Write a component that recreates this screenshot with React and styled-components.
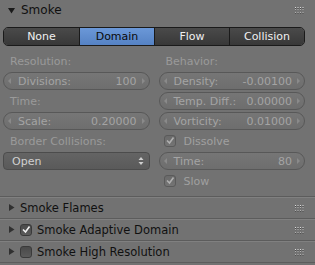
import React from "react";
import styled, { createGlobalStyle } from "styled-components";

const Global = createGlobalStyle`
  html, body { margin: 0; padding: 0; background: #727272; }
  body { font-family: "DejaVu Sans", "Liberation Sans", sans-serif; }
`;

const Root = styled.div`
  width: 315px;
  height: 265px;
  background: #727272;
  overflow: hidden;
  display: flex;
  flex-direction: column;
  & > * { flex-shrink: 0; }
`;

const PanelHeader = styled.div`
  box-sizing: border-box;
  height: ${p => (p.$sub ? "22px" : "20px")};
  flex-shrink: 0;
  display: flex;
  align-items: center;
  padding: 0 11px 0 8px;
  gap: ${p => (p.$sub ? "5px" : "6px")};
  color: #101010;
  font-size: ${p => (p.$sub ? "11.5px" : "12px")};
  border-bottom: ${p => (p.$sub ? "1px solid #5c5c5c" : "none")};
  box-shadow: ${p => (p.$sub ? "inset 0 1px 0 #808080" : "none")};
`;

const Title = styled.span`
  flex: 1;
  white-space: nowrap;
`;

const Body = styled.div`
  padding: 7px 10px 0 3px;
  display: flex;
  flex-direction: column;
  gap: 5px;
`;

const Tabs = styled.div`
  display: grid;
  grid-template-columns: repeat(4, 1fr);
  height: 19px;
  box-sizing: border-box;
  border: 1px solid #1a1a1a;
  border-radius: 5px;
  overflow: hidden;
`;

const Tab = styled.div`
  display: flex;
  align-items: center;
  justify-content: center;
  font-size: 11px;
  color: ${p => (p.$active ? "#0a0a0a" : "#f0f0f0")};
  background: ${p =>
    p.$active
      ? "linear-gradient(#6b98d8, #5582c4)"
      : "linear-gradient(#4a4a4a, #383838)"};
  border-left: ${p => (p.$first ? "none" : "1px solid #1a1a1a")};
`;

const Columns = styled.div`
  display: grid;
  grid-template-columns: 1fr 1fr;
  column-gap: 9px;
`;

const Col = styled.div`
  display: flex;
  flex-direction: column;
`;

const Row = styled.div`
  height: 20px;
  display: flex;
  align-items: center;
`;

const Label = styled.div`
  font-size: 11px;
  color: #9a9a9a;
  padding-left: 7px;
`;

const Field = styled.div`
  flex: 1;
  height: 18px;
  box-sizing: border-box;
  border: 1px solid #585858;
  border-radius: 9px;
  background: linear-gradient(#767676, #6e6e6e);
  display: flex;
  align-items: center;
  padding: 0 12px 0 14px;
  font-size: 11px;
  color: #a4a4a4;
  position: relative;
`;

const Arrow = styled.span`
  position: absolute;
  top: 5px;
  ${p => (p.$right ? "right: 4px;" : "left: 4px;")}
  width: 0;
  height: 0;
  border-top: 3px solid transparent;
  border-bottom: 3px solid transparent;
  ${p =>
    p.$right
      ? "border-left: 3px solid #8a8a8a;"
      : "border-right: 3px solid #8a8a8a;"}
`;

const Name = styled.span`
  flex: 1;
`;

const Select = styled.div`
  flex: 1;
  height: 18px;
  box-sizing: border-box;
  border: 1px solid #4c4c4c;
  border-radius: 4px;
  background: linear-gradient(#646464, #5a5a5a);
  display: flex;
  align-items: center;
  padding: 0 5px 0 8px;
  font-size: 11px;
  color: #d0d0d0;
`;

const Check = styled.div`
  display: flex;
  align-items: center;
  gap: 8px;
  padding-left: 5px;
  font-size: 11px;
  color: #a0a0a0;
`;

const Box = styled.div`
  width: 12px;
  height: 12px;
  box-sizing: border-box;
  border: 1px solid ${p => (p.$dark ? "#3a3a3a" : "#5a5a5a")};
  border-radius: 3px;
  background: ${p => (p.$dark ? "linear-gradient(#4a4a4a,#5a5a5a)" : "linear-gradient(#6a6a6a,#747474)")};
  display: flex;
  align-items: center;
  justify-content: center;
`;

const Subs = styled.div`
  margin-top: auto;
  margin-bottom: 2px;
  display: flex;
  flex-direction: column;
  border-top: 1px solid #5c5c5c;
`;

const Tri = ({ open }) => (
  <svg width="7" height="7" viewBox="0 0 7 7">
    {open ? <path d="M0 1 L7 1 L3.5 6.5 Z" fill="#1a1a1a" /> : <path d="M1 0 L6.5 3.5 L1 7 Z" fill="#303030" />}
  </svg>
);

const Grip = () => (
  <svg width="11" height="8" viewBox="0 0 11 8">
    {[0, 1, 2, 3].map(i =>
      [0, 1, 2].map(j => (
        <g key={`${i}-${j}`}>
          <rect x={2 + i * 2.5} y={1 + j * 2.4} width="1" height="1" fill="#dcdcdc" />
          <rect x={2 + i * 2.5} y={2 + j * 2.4} width="1" height="1" fill="#4a4a4a" />
        </g>
      ))
    )}
  </svg>
);

const Tick = ({ color = "#c8c8c8" }) => (
  <svg width="10" height="10" viewBox="0 0 10 10">
    <path d="M2 4.5 L4.5 7 L8.5 1.5" stroke={color} strokeWidth="1.6" fill="none" />
  </svg>
);

const Num = ({ name, value }) => (
  <Field>
    <Arrow />
    <Name>{name}</Name>
    <span>{value}</span>
    <Arrow $right />
  </Field>
);

const Updown = () => (
  <svg width="6" height="10" viewBox="0 0 6 10">
    <path d="M0.5 4 L3 1 L5.5 4 Z M0.5 6 L3 9 L5.5 6 Z" fill="#cfcfcf" />
  </svg>
);

export default function App() {
  return (
    <Root>
      <Global />
      <PanelHeader>
        <Tri open />
        <Title>Smoke</Title>
        <Grip />
      </PanelHeader>
      <Body>
        <Tabs>
          <Tab $first>None</Tab>
          <Tab $active>Domain</Tab>
          <Tab>Flow</Tab>
          <Tab>Collision</Tab>
        </Tabs>
        <Columns>
          <Col>
            <Row><Label>Resolution:</Label></Row>
            <Row><Num name="Divisions:" value="100" /></Row>
            <Row><Label>Time:</Label></Row>
            <Row><Num name="Scale:" value="0.20000" /></Row>
            <Row><Label>Border Collisions:</Label></Row>
            <Row>
              <Select>
                <Name>Open</Name>
                <Updown />
              </Select>
            </Row>
          </Col>
          <Col>
            <Row><Label>Behavior:</Label></Row>
            <Row><Num name="Density:" value="-0.00100" /></Row>
            <Row><Num name="Temp. Diff.:" value="0.00000" /></Row>
            <Row><Num name="Vorticity:" value="0.01000" /></Row>
            <Row>
              <Check><Box><Tick color="#b0b0b0" /></Box>Dissolve</Check>
            </Row>
            <Row><Num name="Time:" value="80" /></Row>
            <Row>
              <Check><Box><Tick color="#b0b0b0" /></Box>Slow</Check>
            </Row>
          </Col>
        </Columns>
      </Body>
      <Subs>
        <PanelHeader $sub>
          <Tri />
          <Title>Smoke Flames</Title>
          <Grip />
        </PanelHeader>
        <PanelHeader $sub>
          <Tri />
          <Box $dark><Tick color="#f0f0f0" /></Box>
          <Title>Smoke Adaptive Domain</Title>
          <Grip />
        </PanelHeader>
        <PanelHeader $sub>
          <Tri />
          <Box $dark />
          <Title>Smoke High Resolution</Title>
          <Grip />
        </PanelHeader>
      </Subs>
    </Root>
  );
}
